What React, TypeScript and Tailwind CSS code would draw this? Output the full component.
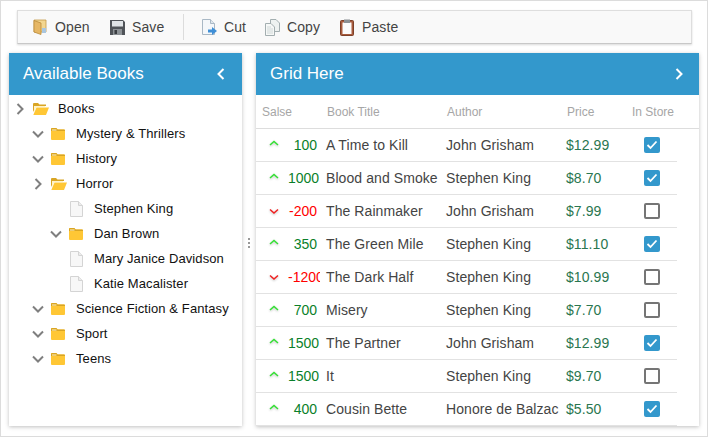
const ff = "font-['Liberation_Sans',Arial,sans-serif]";

function Chevron({ dir, color = "#7f7f7f", size = 12, width = 2 }: { dir: "right" | "down" | "left"; color?: string; size?: number; width?: number }) {
  const d = dir === "right" ? "M3.5 1 L8.5 6 L3.5 11" : dir === "left" ? "M8.5 1 L3.5 6 L8.5 11" : "M1 3.5 L6 8.5 L11 3.5";
  return (
    <svg width={size} height={size} viewBox="0 0 12 12" fill="none">
      <path d={d} stroke={color} strokeWidth={width} />
    </svg>
  );
}

function FolderClosed() {
  return (
    <svg width="14" height="12" viewBox="0 0 14 12">
      <path d="M0 1.2 Q0 0 1 0 H5 Q6 0 6.5 1.5 H13 Q14 1.5 14 2.5 V11 Q14 12 13 12 H1 Q0 12 0 11 Z" fill="#ffc735" />
      <path d="M0 1.2 Q0 0 1 0 H5 Q6 0 6.5 1.5 H13 Q14 1.5 14 2.5 V3 H0 Z" fill="#d9a524" />
      <rect x="1" y="1.5" width="4.5" height="1" fill="#fff3c8" />
    </svg>
  );
}

function FolderOpen() {
  return (
    <svg width="16" height="12" viewBox="0 0 16 12">
      <path d="M0 1 Q0 0 1 0 H5 L6.5 1.5 H13 V3 H3 L0 9 Z" fill="#d9a524" />
      <path d="M1 3 H12 V4 H3.5 L1 9 Z" fill="#fff3c8" />
      <path d="M3.5 4.5 H16 L13 12 H0.3 Z" fill="#ffc735" />
    </svg>
  );
}

function Doc() {
  return (
    <svg width="13" height="16" viewBox="0 0 13 16">
      <path d="M.5.5 H8.5 L12.5 4.5 V15.5 H.5 Z" fill="#f7f7f7" stroke="#d4d4d4" />
      <path d="M8.5.5 V4.5 H12.5" fill="#ececec" stroke="#d4d4d4" />
    </svg>
  );
}

type T = { level: number; label: string; kind: "open" | "closed" | "doc"; chev?: "right" | "down" };
const tree: T[] = [
  { level: 0, label: "Books", kind: "open", chev: "right" },
  { level: 1, label: "Mystery & Thrillers", kind: "closed", chev: "down" },
  { level: 1, label: "History", kind: "closed", chev: "down" },
  { level: 1, label: "Horror", kind: "open", chev: "right" },
  { level: 2, label: "Stephen King", kind: "doc" },
  { level: 2, label: "Dan Brown", kind: "closed", chev: "down" },
  { level: 2, label: "Mary Janice Davidson", kind: "doc" },
  { level: 2, label: "Katie Macalister", kind: "doc" },
  { level: 1, label: "Science Fiction & Fantasy", kind: "closed", chev: "down" },
  { level: 1, label: "Sport", kind: "closed", chev: "down" },
  { level: 1, label: "Teens", kind: "closed", chev: "down" },
];

const books = [
  { s: 100, t: "A Time to Kill", a: "John Grisham", p: "$12.99", c: true },
  { s: 1000, t: "Blood and Smoke", a: "Stephen King", p: "$8.70", c: true },
  { s: -200, t: "The Rainmaker", a: "John Grisham", p: "$7.99", c: false },
  { s: 350, t: "The Green Mile", a: "Stephen King", p: "$11.10", c: true },
  { s: -1200, t: "The Dark Half", a: "Stephen King", p: "$10.99", c: false },
  { s: 700, t: "Misery", a: "Stephen King", p: "$7.70", c: false },
  { s: 1500, t: "The Partner", a: "John Grisham", p: "$12.99", c: true },
  { s: 1500, t: "It", a: "Stephen King", p: "$9.70", c: false },
  { s: 400, t: "Cousin Bette", a: "Honore de Balzac", p: "$5.50", c: true },
];

function ToolBtn({ icon, label, className }: { icon: React.ReactNode; label: string; className: string }) {
  return (
    <div className={`flex items-center ${className}`}>
      <span className="flex w-[22px] justify-start">{icon}</span>
      <span className="text-[14px] tracking-[0.1px] text-[#444]">{label}</span>
    </div>
  );
}

export default function App() {
  return (
    <div className={`${ff} flex h-[437px] w-[708px] flex-col overflow-hidden border border-[#dcdcdc] bg-white`}>
      <div className="ml-[16px] mt-[9px] flex h-[34px] w-[675px] items-center border border-[#dedede] border-b-[#c8c8c8] bg-[#f9f9f9] shadow-[0_1px_2px_rgba(0,0,0,0.15)]">
        <ToolBtn
          className="ml-[15px] w-[77px]"
          label="Open"
          icon={
            <svg width="15" height="16" viewBox="0 0 15 16">
              <path d="M1 1 H13 V13 H1 Z" fill="#f3d68f" stroke="#c49a4a" strokeWidth=".8" />
              <path d="M1 1.5 L8 4 V15.5 L1 13 Z" fill="#e6b765" stroke="#b98a3a" strokeWidth=".8" />
              <path d="M9 9 H13 V14 H9 Z" fill="#a9c6df" />
            </svg>
          }
        />
        <ToolBtn
          className="w-[73px]"
          label="Save"
          icon={
            <svg width="15" height="15" viewBox="0 0 15 15">
              <path d="M0 0 H13 L15 2 V15 H0 Z" fill="#4f5358" />
              <rect x="2" y="1" width="11" height="5.5" fill="#dfe3e6" />
              <rect x="3" y="9" width="9" height="6" fill="#8d9296" />
              <rect x="4.5" y="10" width="2.5" height="4" fill="#3a3d41" />
            </svg>
          }
        />
        <div className="h-[26px] w-px bg-[#dcdcdc]" />
        <ToolBtn
          className="ml-[18px] w-[63px]"
          label="Cut"
          icon={
            <svg width="16" height="16" viewBox="0 0 16 16">
              <path d="M.5.5 H8.5 L12.5 4.5 V15.5 H.5 Z" fill="#f4f7fa" stroke="#a9b8c5" />
              <path d="M8.5.5 V4.5 H12.5" fill="#dfe6ec" stroke="#a9b8c5" />
              <path d="M6 10.5 H10 V8 L15 12 L10 16 V13.5 H6 Z" fill="#3f8fd6" />
            </svg>
          }
        />
        <ToolBtn
          className="w-[75px]"
          label="Copy"
          icon={
            <svg width="15" height="17" viewBox="0 0 15 17">
              <path d="M5.5.5 H11 L14.5 4 V12.5 H5.5 Z" fill="#eef2f1" stroke="#a3aeb0" />
              <path d="M.5 4.5 H6 L9.5 8 V16.5 H.5 Z" fill="#f6f8f7" stroke="#a3aeb0" />
              <path d="M2 8 H6 M2 10 H8 M2 12 H8 M2 14 H8" stroke="#d0d8d8" />
            </svg>
          }
        />
        <ToolBtn
          className="w-[75px]"
          label="Paste"
          icon={
            <svg width="14" height="17" viewBox="0 0 14 17">
              <rect x=".5" y="1.5" width="13" height="15" rx="1" fill="#a85b3d" stroke="#7d4029" />
              <rect x="2.5" y="3.5" width="9" height="11.5" fill="#fbfbfb" />
              <rect x="4" y=".5" width="6" height="3.5" fill="#8b9094" />
            </svg>
          }
        />
      </div>

      <div className="ml-[8px] mt-[9px] flex h-[373px] items-stretch">
        <div className="flex w-[233px] flex-col bg-white shadow-[0_1px_4px_rgba(0,0,0,0.25)]">
          <div className="flex h-[42px] shrink-0 items-center justify-between bg-[#3398cc] pl-[14px] pr-[15px] text-[17px] text-white">
            <span>Available Books</span>
            <Chevron dir="left" color="#fff" />
          </div>
          <div className="flex flex-col pt-px">
            {tree.map((n) => (
              <div
                key={n.label}
                className={`flex h-[25px] items-center text-[13px] tracking-[0.1px] text-[#111] ${
                  n.level === 0 ? "pl-[5px]" : n.level === 1 ? "pl-[23px]" : "pl-[41px]"
                }`}
              >
                <span className="flex w-[19px] items-center">{n.chev && <Chevron dir={n.chev} />}</span>
                <span className="flex w-[25px] items-center">
                  {n.kind === "open" ? <FolderOpen /> : n.kind === "closed" ? <FolderClosed /> : <span className="ml-px flex"><Doc /></span>}
                </span>
                <span className="whitespace-nowrap">{n.label}</span>
              </div>
            ))}
          </div>
        </div>

        <div className="flex w-[14px] flex-col items-center justify-center gap-[2px] pb-[1px] pt-[8px]">
          <span className="size-[2px] bg-[#999]" />
          <span className="size-[2px] bg-[#999]" />
          <span className="size-[2px] bg-[#999]" />
        </div>

        <div className="flex w-[443px] flex-col overflow-hidden bg-white shadow-[0_1px_4px_rgba(0,0,0,0.25)]">
          <div className="flex h-[42px] shrink-0 items-center justify-between bg-[#3398cc] pl-[14px] pr-[14px] text-[17px] text-white">
            <span>Grid Here</span>
            <Chevron dir="right" color="#fff" />
          </div>
          <div className="flex h-[34px] shrink-0 items-center border-b border-[#ddd] text-[12px] text-[#a6a6a6]">
            <span className="w-[66px] pl-[6px]">Salse</span>
            <span className="w-[120px] pl-[5px]">Book Title</span>
            <span className="w-[120px] pl-[5px]">Author</span>
            <span className="w-[64px] pl-[5px]">Price</span>
            <span className="w-[73px] pl-[6px]">In Store</span>
          </div>
          {books.map((b) => {
            const up = b.s > 0;
            const long = Math.abs(b.s) >= 1000;
            return (
              <div key={b.t} className="flex h-[33px] w-[421px] shrink-0 items-center border-b border-[#e2e2e2] text-[14px] tracking-[0.08px] text-[#444]">
                <span className="flex w-[32px] justify-center pl-[4px]">
                  <svg
                    width="10"
                    height="7"
                    viewBox="0 0 10 7"
                    fill="none"
                    className={`drop-shadow-[0_1px_1px_rgba(0,0,0,0.25)] ${up ? "mb-[4px]" : ""}`}
                  >
                    <path d={up ? "M1 5 L5 1.5 L9 5" : "M1 1.5 L5 5 L9 1.5"} stroke={up ? "#34e034" : "#f02020"} strokeWidth="1.5" />
                  </svg>
                </span>
                <span className={`w-[32px] overflow-hidden whitespace-nowrap tracking-normal ${long ? "text-left" : "pr-[3px] text-right"} ${up ? "text-[#0a7f2a]" : "text-[#f00]"}`}>
                  {b.s}
                </span>
                <span className="w-[122px] overflow-hidden whitespace-nowrap pl-[6px]">{b.t}</span>
                <span className="w-[120px] overflow-hidden whitespace-nowrap pl-[4px]">{b.a}</span>
                <span className="w-[64px] pl-[4px] text-[#2a7650]">{b.p}</span>
                <span className="flex w-[51px] justify-center">
                  {b.c ? (
                    <span className="flex size-[16px] items-center justify-center rounded-[2px] bg-[#3398cc]">
                      <svg width="12" height="10" viewBox="0 0 12 10" fill="none">
                        <path d="M1.5 5 L4.5 8 L10.5 1.5" stroke="#fff" strokeWidth="1.8" />
                      </svg>
                    </span>
                  ) : (
                    <span className="size-[16px] rounded-[2px] border-2 border-[#757575] bg-white" />
                  )}
                </span>
              </div>
            );
          })}
        </div>
      </div>
    </div>
  );
}
